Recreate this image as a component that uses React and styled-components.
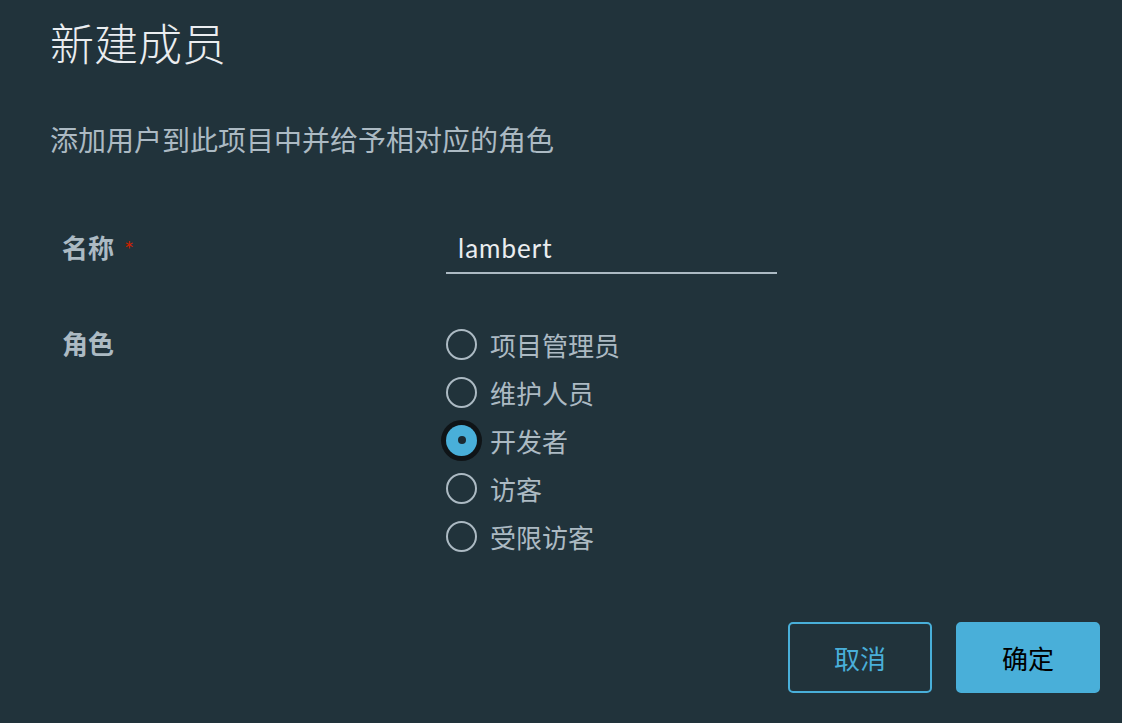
import React, { useState } from 'react'
import styled, { createGlobalStyle } from 'styled-components'

const GlobalStyle = createGlobalStyle`
  html, body {
    margin: 0;
    padding: 0;
    background: #21333b;
  }
  body {
    font-family: Lato, "Noto Sans CJK SC", sans-serif;
  }
`

const Dialog = styled.div`
  width: 1122px;
  height: 723px;
  box-sizing: border-box;
  padding: 20px 22px 0 50px;
  background: #21333b;
  display: flex;
  flex-direction: column;
`

const Title = styled.h3`
  margin: 0;
  font-size: 44px;
  line-height: 48px;
  font-weight: 300;
  color: #eaedf0;
  font-family: Lato, "Noto Sans CJK SC", sans-serif;
`

const Description = styled.p`
  margin: 52px 0 0;
  font-size: 28px;
  line-height: 40px;
  color: #acbac3;
  font-family: Lato, "Noto Sans CJK SC", sans-serif;
`

const Form = styled.div`
  margin-top: 64px;
  padding-left: 12px;
  display: flex;
  flex-direction: column;
  row-gap: 46px;
`

const FormRow = styled.div`
  display: grid;
  grid-template-columns: 384px 1fr;
  align-items: start;
`

const Label = styled.label`
  font-size: 26px;
  line-height: 48px;
  font-weight: 700;
  color: #acbac3;
  font-family: Lato, "Noto Sans CJK SC", sans-serif;
`

const Required = styled.span`
  color: #c92100;
  font-weight: 400;
  margin-left: 10px;
  font-size: 24px;
`

const TextInput = styled.input`
  width: 331px;
  height: 50px;
  box-sizing: border-box;
  padding: 0 12px;
  border: none;
  border-bottom: 2px solid #acbac3;
  background: transparent;
  color: #eaedf0;
  font-size: 26px;
  letter-spacing: 1px;
  font-family: Lato, "Noto Sans CJK SC", sans-serif;
  outline: none;
`

const RadioGroup = styled.div`
  display: flex;
  flex-direction: column;
`

const RadioRow = styled.div`
  display: flex;
  align-items: center;
  column-gap: 13px;
  height: 48px;
  cursor: pointer;
`

const RadioCircle = styled.span`
  width: 31px;
  height: 31px;
  box-sizing: border-box;
  border-radius: 50%;
  border: ${props => props.checked ? 'none' : '2px solid #acbac3'};
  background: ${props => props.checked ? '#49afd9' : 'transparent'};
  box-shadow: ${props => props.checked ? '0 0 0 5px #0f1417' : 'none'};
  display: flex;
  align-items: center;
  justify-content: center;
`

const RadioDot = styled.span`
  width: 8px;
  height: 8px;
  border-radius: 50%;
  background: #1b2a32;
`

const RadioText = styled.span`
  font-size: 26px;
  color: #acbac3;
  font-family: Lato, "Noto Sans CJK SC", sans-serif;
`

const Footer = styled.div`
  margin-top: 62px;
  display: flex;
  justify-content: flex-end;
  column-gap: 24px;
`

const Button = styled.button`
  width: 144px;
  height: 71px;
  box-sizing: border-box;
  border-radius: 5px;
  border: 2px solid #49afd9;
  background: ${props => props.primary ? '#49afd9' : 'transparent'};
  color: ${props => props.primary ? '#000000' : '#49afd9'};
  font-size: 26px;
  font-family: Lato, "Noto Sans CJK SC", sans-serif;
  cursor: pointer;
`

export default function App() {
  const roles = [
    { key: 1, title: '项目管理员' },
    { key: 2, title: '维护人员' },
    { key: 3, title: '开发者' },
    { key: 4, title: '访客' },
    { key: 5, title: '受限访客' },
  ]
  const [role, setRole] = useState(3)
  const [name, setName] = useState('lambert')

  return (
    <>
      <GlobalStyle />
      <Dialog>
        <Title>新建成员</Title>
        <Description>添加用户到此项目中并给予相对应的角色</Description>
        <Form>
          {/* name */}
          <FormRow>
            <Label>名称<Required>*</Required></Label>
            <TextInput value={name} onChange={e => setName(e.target.value)} />
          </FormRow>
          {/* role */}
          <FormRow>
            <Label>角色</Label>
            <RadioGroup>
              {roles.map(el => (
                <RadioRow key={el.key} onClick={() => setRole(el.key)}>
                  <RadioCircle checked={role === el.key}>
                    {role === el.key && <RadioDot />}
                  </RadioCircle>
                  <RadioText>{el.title}</RadioText>
                </RadioRow>
              ))}
            </RadioGroup>
          </FormRow>
        </Form>
        <Footer>
          <Button>取消</Button>
          <Button primary>确定</Button>
        </Footer>
      </Dialog>
    </>
  )
}
